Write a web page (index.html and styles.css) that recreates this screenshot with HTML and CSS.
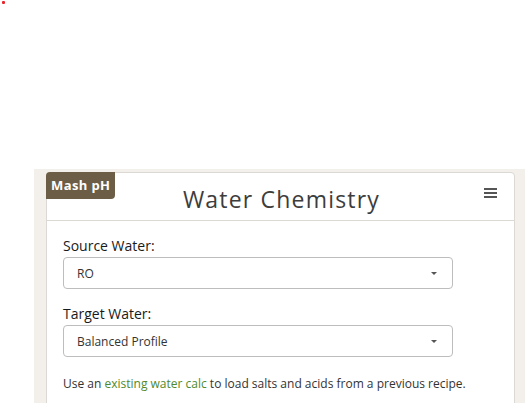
FILE: index.html
```html
<!DOCTYPE html>
<html>
<head>
<meta charset="utf-8">
<link rel="stylesheet" href="styles.css">
</head>
<body>
<div class="top"><span class="dot"></span></div>
<div class="main">
  <div class="card">
    <div class="badge">Mash pH</div>
    <div class="card-header">
      <h1 class="title">Water Chemistry</h1>
      <svg class="menu" width="14" height="12" viewBox="0 0 14 12"><rect x="0" y="1" width="13" height="2" fill="#555"/><rect x="0" y="5" width="13" height="2" fill="#555"/><rect x="0" y="9" width="13" height="2" fill="#555"/></svg>
    </div>
    <div class="card-body">
      <div class="field">
        <label class="label">Source Water:</label>
        <div class="select"><span>RO</span><span class="caret"></span></div>
      </div>
      <div class="field">
        <label class="label">Target Water:</label>
        <div class="select"><span>Balanced Profile</span><span class="caret"></span></div>
      </div>
      <p class="help">Use an <a class="link">existing water calc</a> to load salts and acids from a previous recipe.</p>
    </div>
  </div>
</div>
</body>
</html>
```
FILE: styles.css
```css
html, body {
  margin: 0;
  padding: 0;
  background: #fff;
  font-family: "Open Sans", "Liberation Sans", sans-serif;
  overflow: hidden;
}
.top {
  height: 169px;
  padding: 1px 0 0 2px;
  box-sizing: border-box;
}
.dot {
  display: block;
  width: 3px;
  height: 3px;
  background: #e8262a;
  border-radius: 1px;
}
.main {
  margin-left: 34px;
  background: #f3efea;
  padding: 3px 10px 0 12px;
  height: 234px;
  box-sizing: border-box;
  overflow: hidden;
}
.card {
  position: relative;
  background: #fff;
  border: 1px solid #dcd8d3;
  border-radius: 4px;
  padding-bottom: 20px;
}
.badge {
  position: absolute;
  top: -1px;
  left: -1px;
  width: 69px;
  height: 27px;
  box-sizing: border-box;
  background: #6c5d46;
  color: #fff;
  font-weight: 700;
  font-size: 13px;
  letter-spacing: 0.4px;
  padding: 4px 0 0 5px;
  border-radius: 4px 0 4px 0;
}
.card-header {
  height: 47px;
  border-bottom: 1px solid #dcd8d3;
  display: flex;
  align-items: center;
  justify-content: center;
  position: relative;
}
.title {
  margin: 5px 0 0 2px;
  font-size: 23px;
  font-weight: 500;
  letter-spacing: 1.2px;
  color: #3d3d3d;
}
.menu {
  position: absolute;
  right: 16px;
  top: 14px;
}
.card-body {
  padding: 16px 16px 0 16px;
}
.field {
  margin-bottom: 16px;
}
.label {
  display: block;
  font-size: 14px;
  color: #1a1a1a;
  margin-bottom: 2px;
  line-height: 18px;
}
.select {
  width: 390px;
  height: 32px;
  box-sizing: border-box;
  border: 1px solid #bdbdbd;
  border-radius: 4px;
  display: flex;
  align-items: center;
  justify-content: space-between;
  padding: 0 15px 0 13px;
  font-size: 12px;
  color: #333;
}
.caret {
  width: 0;
  height: 0;
  border-left: 3px solid transparent;
  border-right: 3px solid transparent;
  border-top: 3px solid #555;
}
.help {
  margin: 0;
  padding-top: 2px;
  font-size: 12px;
  color: #333;
}
.link {
  color: #4f8a2c;
}
```
